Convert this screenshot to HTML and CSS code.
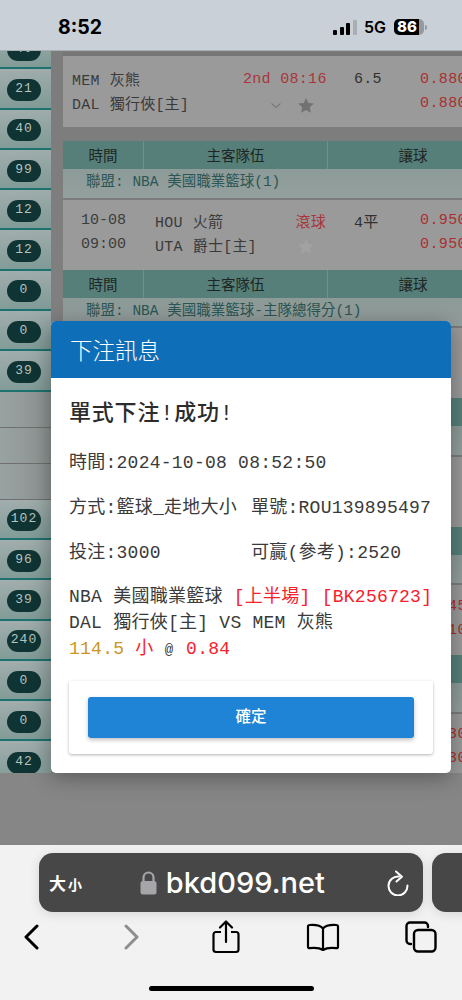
FILE: index.html
```html
<!DOCTYPE html>
<html lang="zh-Hant">
<head>
  <meta charset="UTF-8">
  <meta name="viewport" content="width=device-width, initial-scale=1.0">
  <title>下注訊息</title>
  <link rel="stylesheet" href="styles.css">
</head>
<body>
  <div class="status-bar">
    <div class="clock">8:52</div>
    <div class="status-right">
      <div class="signal"><i class="b1"></i><i class="b2"></i><i class="b3"></i><i class="b4"></i></div>
      <div class="net">5G</div>
      <div class="battery">86</div>
      <div class="battery-nub"></div>
    </div>
  </div>

  <div class="page">
    <div class="side">
      <div class="cell"><span class="pill">40</span></div>
      <div class="cell"><span class="pill">21</span></div>
      <div class="cell"><span class="pill">40</span></div>
      <div class="cell"><span class="pill">99</span></div>
      <div class="cell"><span class="pill">12</span></div>
      <div class="cell"><span class="pill">12</span></div>
      <div class="cell"><span class="pill">0</span></div>
      <div class="cell"><span class="pill">0</span></div>
      <div class="cell"><span class="pill">39</span></div>
      <div class="cell empty"></div>
      <div class="cell empty"></div>
      <div class="cell empty"></div>
      <div class="cell"><span class="pill">102</span></div>
      <div class="cell"><span class="pill">96</span></div>
      <div class="cell"><span class="pill">39</span></div>
      <div class="cell"><span class="pill">240</span></div>
      <div class="cell"><span class="pill">0</span></div>
      <div class="cell"><span class="pill">0</span></div>
      <div class="cell last"><span class="pill">42</span></div>
    </div>

    <div class="main">
      <div class="top-line"></div>
      <div class="game first">
        <div class="teams wide"><b>MEM</b> 灰熊</div>
        <div class="live">2nd 08:16</div>
        <div class="hcp">6.5</div>
        <div class="odds">0.880</div>
        <div class="teams wide"><b>DAL</b> 獨行俠[主]</div>
        <div class="marks">
          <svg class="chev" width="12" height="7" viewBox="0 0 12 7"><path d="M1.5 1.5 6 5.5l4.5-4" fill="none" stroke="#7a7a7a" stroke-width="1.2"/></svg>
          <svg class="star" width="16" height="15" viewBox="0 0 16 15"><path d="M8 0l2.3 5 5.6.6-4.2 3.7 1.2 5.4L8 12l-4.9 2.7 1.2-5.4L.1 5.6 5.7 5z" fill="#727272"/></svg>
        </div>
        <div></div>
        <div class="odds">0.880</div>
      </div>

      <div class="block">
        <div class="head"><div>時間</div><div>主客隊伍</div><div>讓球</div></div>
        <div class="league">聯盟: NBA 美國職業籃球(1)</div>
        <div class="game">
          <div class="time">10-08</div>
          <div class="teams"><b>HOU</b> 火箭</div>
          <div class="live">滾球</div>
          <div class="hcp">4平</div>
          <div class="odds">0.950</div>
          <div class="time">09:00</div>
          <div class="teams"><b>UTA</b> 爵士[主]</div>
          <div class="marks">
            <svg class="star" width="16" height="15" viewBox="0 0 16 15"><path d="M8 0l2.3 5 5.6.6-4.2 3.7 1.2 5.4L8 12l-4.9 2.7 1.2-5.4L.1 5.6 5.7 5z" fill="#a2a2a2"/></svg>
          </div>
          <div></div>
          <div class="odds">0.950</div>
        </div>
      </div>

      <div class="block">
        <div class="head"><div>時間</div><div>主客隊伍</div><div>讓球</div></div>
        <div class="league">聯盟: NBA 美國職業籃球-主隊總得分(1)</div>
        <div class="game"></div>
      </div>

      <div class="block">
        <div class="head"><div></div><div></div><div></div></div>
        <div class="league"></div>
        <div class="game"></div>
      </div>

      <div class="block">
        <div class="head"><div></div><div></div><div></div></div>
        <div class="league"></div>
        <div class="game">
          <div class="odds far">45</div>
          <div class="odds far">10</div>
        </div>
      </div>

      <div class="block">
        <div class="head"><div></div><div></div><div></div></div>
        <div class="league"></div>
        <div class="game">
          <div class="odds far">30</div>
          <div class="odds far">30</div>
        </div>
      </div>
    </div>

    <div class="modal">
      <div class="modal-head">下注訊息</div>
      <div class="modal-body">
        <h2>單式下注!成功!</h2>
        <div class="info">時間:2024-10-08 08:52:50</div>
        <div class="info two"><span>方式:籃球_走地大小</span><span>單號:ROU139895497</span></div>
        <div class="info two"><span>投注:3000</span><span>可贏(參考):2520</span></div>
        <div class="detail">
          <div>NBA 美國職業籃球 <span class="red">[上半場] [BK256723]</span></div>
          <div>DAL 獨行俠[主] VS MEM 灰熊</div>
          <div><span class="gold">114.5</span> <span class="red">小</span> <span class="at">@</span> <span class="red">0.84</span></div>
        </div>
        <div class="card">
          <button class="ok">確定</button>
        </div>
      </div>
    </div>
  </div>

  <div class="browser">
    <div class="tabs-row">
      <div class="url-bar">
        <div class="aa">大<small>小</small></div>
        <div class="url">
          <svg width="17" height="24" viewBox="0 0 17 24"><path d="M3.5 11V6.5a5 5 0 0 1 10 0V11" fill="none" stroke="#a5a5aa" stroke-width="2.2"/><rect x="0.5" y="10" width="16" height="13.5" rx="2.5" fill="#a5a5aa"/></svg>
          <span>bkd099.net</span>
        </div>
        <svg class="reload" width="22" height="26" viewBox="0 0 22 26"><path d="M12 6.500A9.500 9.500 0 1 0 20.500 15.500" fill="none" stroke="#fff" stroke-width="2" stroke-linecap="round"/><path d="M9 1.500 15 6.800 9.500 11.500" fill="none" stroke="#fff" stroke-width="2" stroke-linecap="round" stroke-linejoin="round"/></svg>
      </div>
      <div class="url-bar next"></div>
    </div>
    <div class="toolbar">
      <svg width="16" height="26" viewBox="0 0 16 26"><path d="M14 2 3 13l11 11" fill="none" stroke="#000" stroke-width="3" stroke-linecap="round" stroke-linejoin="round"/></svg>
      <svg class="forward" width="16" height="26" viewBox="0 0 16 26"><path d="M2 2l11 11L2 24" fill="none" stroke="#8e8e8e" stroke-width="3" stroke-linecap="round" stroke-linejoin="round"/></svg>
      <svg width="28" height="34" viewBox="0 0 28 34"><path d="M9 12H4a2.500 2.500 0 0 0-2.500 2.500v15A2.500 2.500 0 0 0 4 32h20a2.500 2.500 0 0 0 2.500-2.500v-15A2.500 2.500 0 0 0 24 12h-5" fill="none" stroke="#000" stroke-width="2.200"/><path d="M14 22V2M8 7.500 14 1.500l6 6" fill="none" stroke="#000" stroke-width="2.200" stroke-linecap="round" stroke-linejoin="round"/></svg>
      <svg width="34" height="28" viewBox="0 0 34 28"><path d="M17 5.500C14.500 2.500 10 1.500 3.500 2 2.500 2 2 2.700 2 3.500V24c0 .8.600 1.300 1.500 1.200C9 24.500 14 25 17 27c3-2 8-2.500 13.500-1.800.9.100 1.500-.4 1.500-1.200V3.500c0-.8-.5-1.500-1.500-1.500C24 1.500 19.500 2.500 17 5.500zm0 0V27" fill="none" stroke="#000" stroke-width="2.200" stroke-linejoin="round"/></svg>
      <svg width="32" height="32" viewBox="0 0 32 32"><rect x="9" y="9" width="21.500" height="21.500" rx="4" fill="none" stroke="#000" stroke-width="2.400"/><path d="M6 23H5a3.500 3.500 0 0 1-3.500-3.500V5A3.500 3.500 0 0 1 5 1.500h14.500A3.500 3.500 0 0 1 23 5v1" fill="none" stroke="#000" stroke-width="2.400" stroke-linecap="round"/></svg>
    </div>
    <div class="home-bar"></div>
  </div>
</body>
</html>
```

FILE: styles.css
```css
* {
  box-sizing: border-box;
  margin: 0;
  padding: 0;
}

body {
  width: 462px;
  height: 1000px;
  overflow: hidden;
  display: flex;
  flex-direction: column;
  font-family: "Liberation Mono", "Noto Sans CJK TC", monospace;
  background: #f2f2f2;
}

/* status bar */
.status-bar {
  height: 51px;
  flex: none;
  background: #c9d0d8;
  display: flex;
  justify-content: space-between;
  align-items: center;
  padding: 4px 35px 0 58px;
  border-bottom: 1px solid #a9afb5;
}

.clock {
  font-family: Inter, "Liberation Sans", sans-serif;
  font-size: 19.5px;
  font-weight: 700;
  color: #000;
}

.status-right {
  display: flex;
  align-items: center;
}

.signal {
  display: flex;
  align-items: flex-end;
  gap: 2.5px;
  height: 15px;
  margin-right: 7px;
}

.signal i {
  width: 4px;
  background: #000;
  border-radius: 1px;
}

.signal .b1 { height: 5px; }
.signal .b2 { height: 8px; }
.signal .b3 { height: 11.5px; }
.signal .b4 { height: 15px; background: #a8aeb4; }

.net {
  font-family: Inter, "Liberation Sans", sans-serif;
  font-size: 16px;
  font-weight: 600;
  color: #000;
  margin-right: 8px;
}

.battery {
  width: 30px;
  height: 16px;
  border-radius: 5px;
  background: linear-gradient(90deg, #000 84%, #94999e 84%);
  color: #fff;
  font-family: Inter, "Liberation Sans", sans-serif;
  font-size: 15px;
  font-weight: 800;
  line-height: 16px;
  padding-left: 3px;
}

.battery-nub {
  width: 2px;
  height: 5px;
  margin-left: 1px;
  border-radius: 0 2px 2px 0;
  background: #94999e;
}

/* page behind the dialog */
.page {
  position: relative;
  height: 794px;
  flex: none;
  overflow: hidden;
  display: flex;
  background: linear-gradient(#7c7c7c, #868686 90%);
}

.side {
  width: 51px;
  flex: none;
  height: 722px;
  margin-bottom: auto;
  overflow: hidden;
}

.cell {
  height: 40.3px;
  padding-top: 3px;
  display: flex;
  align-items: center;
  justify-content: center;
  padding-right: 3px;
  border-bottom: 2px solid #1d716e;
  background: linear-gradient(175deg, #a2aead, #7f9a96);
}

.cell:first-child {
  margin-top: -22px;
}

.cell.empty {
  height: 36px;
  background: linear-gradient(90deg, #98a3a1, #8c9190);
  border-bottom: 1px solid #706f6f;
}

.cell.last {
  height: 38px;
  border-bottom: none;
  padding-top: 6px;
}

.pill {
  width: 34px;
  height: 22px;
  border-radius: 11px;
  background: #0f3433;
  color: #b7c2bf;
  font-size: 13px;
  letter-spacing: 1px;
  line-height: 20px;
  text-align: center;
}

.main {
  width: 399px;
  margin-left: 12px;
  flex: none;
  padding-top: 1px;
  height: 722px;
  overflow: hidden;
}

.top-line {
  height: 4px;
  background: #767676;
}

.game {
  height: 70px;
  background: #9a9a9a;
  padding-top: 9px;
  display: grid;
  grid-template-columns: 92px 88px 111px 66px 60px;
  grid-auto-rows: 24px;
  align-items: center;
  color: #303030;
  font-size: 15px;
}

.game.first {
  height: 71px;
  margin-bottom: 14px;
  padding-top: 11px;
}

.time {
  padding-left: 18px;
  color: #3c3c3c;
}

.teams {
  white-space: nowrap;
  color: #3a3a3a;
  letter-spacing: .2px;
}

.teams.wide {
  grid-column: span 2;
  padding-left: 9px;
}

.teams b {
  font-weight: 400;
  margin-right: 1px;
}

.live {
  color: #a8363c;
  text-align: right;
  padding-right: 28px;
  letter-spacing: .3px;
  white-space: nowrap;
}

.hcp {
  letter-spacing: .3px;
}

.odds {
  color: #a8302f;
  letter-spacing: .4px;
}

/* only the last two digits show past the dialog */
.odds.far {
  grid-column: 5;
  padding-left: 28px;
}

.marks {
  display: flex;
  justify-content: flex-end;
  align-items: center;
  gap: 16px;
  padding-right: 40px;
  padding-top: 4px;
}

.block {
  height: 128.5px;
}

.head {
  height: 28px;
  display: grid;
  grid-template-columns: 80px 184px 171px;
  background: #567f79;
  color: #1e2624;
  font-family: "Noto Sans CJK TC", sans-serif;
  font-size: 14.5px;
  line-height: 27px;
  text-align: center;
}

.head div + div {
  border-left: 1px solid #7d8a88;
}

.league {
  height: 30.5px;
  padding-left: 23px;
  border-bottom: 2px solid #7c7c7c;
  background: linear-gradient(#8c9a98, #95a09e);
  color: #2b5653;
  font-size: 14.5px;
  line-height: 27px;
}

/* dialog */
.modal {
  position: absolute;
  left: 51px;
  top: 270px;
  width: 400px;
  background: #fff;
  border-radius: 5px;
  box-shadow: 0 4px 22px rgba(0, 0, 0, .35);
  color: #3a3a3a;
}

.modal-head {
  height: 57px;
  padding-left: 19px;
  background: #0f6eb8;
  border-radius: 5px 5px 0 0;
  color: #fff;
  font-family: "Noto Sans CJK TC", sans-serif;
  font-size: 22.5px;
  font-weight: 300;
  line-height: 56px;
}

.modal-body {
  padding: 22px 18px 19px;
}

.modal-body h2 {
  font-size: 22px;
  font-weight: 500;
  font-family: "Liberation Mono", "Noto Sans CJK TC", sans-serif;
  letter-spacing: .8px;
  line-height: 30px;
  color: #2c2c2c;
}

.info {
  margin-top: 19px;
  padding-top: 1px;
  height: 26px;
  font-size: 18px;
  letter-spacing: .25px;
  line-height: 26px;
  white-space: nowrap;
}

.info.two {
  display: grid;
  grid-template-columns: 182px auto;
}

.detail {
  margin-top: 19px;
  font-size: 18px;
  letter-spacing: .25px;
  line-height: 26px;
  white-space: nowrap;
}

.red {
  color: #f6212b;
}

.gold {
  color: #c9961f;
}

.at {
  font-size: 14px;
  letter-spacing: 2px;
}

.card {
  margin-top: 18px;
  padding: 16px 19px;
  background: #fff;
  border-radius: 3px;
  box-shadow: 0 1px 3px rgba(0, 0, 0, .3);
}

.ok {
  display: block;
  width: 100%;
  height: 41px;
  padding-bottom: 6px;
  border: none;
  border-radius: 3px;
  background: #1f84d6;
  color: #fff;
  font-family: "Noto Sans CJK TC", sans-serif;
  font-size: 15.5px;
  font-weight: 500;
  box-shadow: 0 2px 4px rgba(0, 0, 0, .25);
}

/* safari bar */
.browser {
  flex: 1;
  background: #f2f2f2;
  padding-top: 8px;
  position: relative;
}

.tabs-row {
  display: flex;
  gap: 9px;
  padding-left: 39px;
}

.url-bar {
  width: 384px;
  height: 59px;
  flex: none;
  border-radius: 14px;
  background: #474747;
  box-shadow: 0 2px 12px rgba(0, 0, 0, .12);
  display: flex;
  align-items: center;
  padding: 0 14px 0 10px;
}

.url-bar.next {
  width: 60px;
}

.aa {
  width: 91px;
  color: #fff;
  font-family: "Noto Sans CJK TC", sans-serif;
  font-size: 17px;
  font-weight: 700;
}

.aa small {
  font-size: 14px;
  margin-left: 2px;
}

.url {
  display: flex;
  align-items: center;
  gap: 9px;
  width: 248px;
  color: #fff;
  font-family: Inter, "Liberation Sans", sans-serif;
  font-size: 29px;
  font-weight: 500;
}

.reload {
  margin-left: auto;
}

.toolbar {
  display: grid;
  grid-template-columns: repeat(5, 97.5px);
  justify-items: center;
  align-items: center;
  margin-left: -18px;
  margin-top: 8px;
  height: 34px;
}

.forward {
  margin-left: 8px;
}

.home-bar {
  position: absolute;
  left: 149px;
  bottom: 9px;
  width: 165px;
  height: 5px;
  border-radius: 3px;
  background: #000;
}
```
